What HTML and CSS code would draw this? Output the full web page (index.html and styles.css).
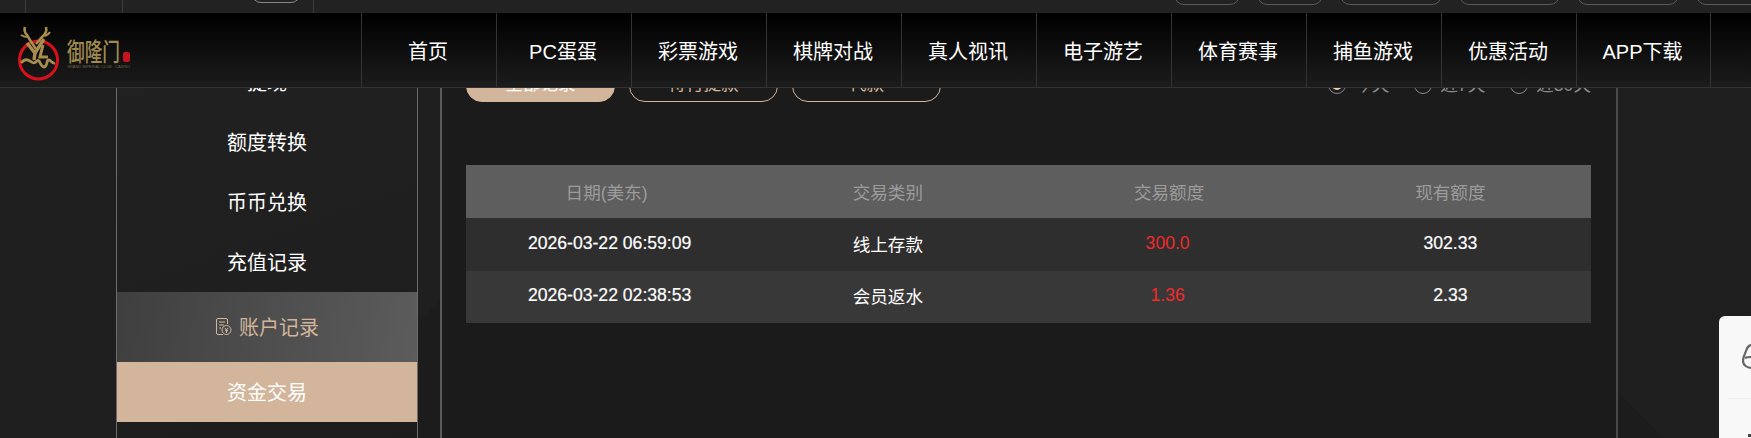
FILE: index.html
```html
<!DOCTYPE html>
<html lang="zh-CN">
<head>
<meta charset="utf-8">
<title>资金交易</title>
<link rel="stylesheet" href="styles.css">
</head>
<body>
<header class="header">
  <div class="topbar">
    <div class="top-cell top-cell-a"></div>
    <div class="top-cell top-cell-b"></div>
    <div class="top-cell top-cell-c"><span class="top-btn top-btn-left"></span></div>
    <div class="top-cell top-cell-d"></div>
    <div class="top-actions">
      <span class="top-btn top-btn-sm"></span>
      <span class="top-btn top-btn-sm"></span>
      <span class="top-btn top-btn-lg"></span>
      <span class="top-btn top-btn-lg"></span>
      <span class="top-btn top-btn-lg"></span>
      <span class="top-btn top-btn-lg"></span>
    </div>
  </div>
  <nav class="nav">
    <a class="logo" href="#">
      <svg class="logo-art" width="125" height="72" viewBox="0 0 125 72">
        <circle cx="26.500" cy="46" r="19" fill="none" stroke="#d8101c" stroke-width="3"/>
        <g fill="none" stroke="#a88d4e">
          <path d="M13 13c-1 3 0 6 2 8l3 5 6 9" stroke-width="2.600"/>
          <path d="M34 13c1 4 0 7-4 10l-6 7" stroke-width="2.600"/>
          <path d="M9 21c3 2 5 2 8 2M38 18c-1 2-3 3-5 4" stroke-width="2"/>
          <path d="M15 29l8 10 9-14M23 39l-1 7" stroke-width="3.400"/>
          <path d="M31 31l-3 12h8" stroke-width="3"/>
          <path d="M9 49c3-4 6-4 9-2s4 3 7 0 3 6 7 6 2-8 5-7 3 4 6 3" stroke-width="2.800"/>
        </g>
        <rect x="111" y="38" width="7" height="10" rx="2" fill="#c8141e"/>
        <text class="logo-name" transform="translate(55 47) scale(1 1.300)" textLength="53" lengthAdjust="spacingAndGlyphs">御隆门</text>
        <text class="logo-sub" x="55" y="54" textLength="63" lengthAdjust="spacingAndGlyphs">GRAND IMPERIAL CLUB · CASINO</text>
      </svg>
    </a>
    <ul class="menu">
      <li class="menu-item">首页</li>
      <li class="menu-item">PC蛋蛋</li>
      <li class="menu-item">彩票游戏</li>
      <li class="menu-item">棋牌对战</li>
      <li class="menu-item">真人视讯</li>
      <li class="menu-item">电子游艺</li>
      <li class="menu-item">体育赛事</li>
      <li class="menu-item">捕鱼游戏</li>
      <li class="menu-item">优惠活动</li>
      <li class="menu-item">APP下载</li>
    </ul>
  </nav>
</header>

<div class="page">
  <aside class="sidebar">
    <div class="side-row">提现</div>
    <div class="side-row">额度转换</div>
    <div class="side-row">币币兑换</div>
    <div class="side-row">充值记录</div>
    <div class="side-group">
      <svg class="side-icon" width="17" height="18" viewBox="0 0 17 18" fill="none" stroke="currentColor" stroke-width="1">
        <path d="M8 16.500H3a1.500 1.500 0 0 1-1.500-1.500V2A1.500 1.500 0 0 1 3 .5h8A1.500 1.500 0 0 1 12.500 2v4"/>
        <path d="M4 4h6M4 7h5M4 10h2"/>
        <circle cx="11.500" cy="12" r="4.500"/>
        <path d="M10 10l1.500 2 1.500-2M11.500 12v3M10 12.700h3"/>
      </svg>
      <span>账户记录</span>
    </div>
    <div class="side-row side-row-active">资金交易</div>
  </aside>

  <main class="main">
    <div class="filters">
      <div class="tabs">
        <span class="tab tab-active">全部记录</span>
        <span class="tab">待付提款</span>
        <span class="tab">代款</span>
      </div>
      <div class="radios">
        <span class="radio"><i class="radio-dot radio-dot-on"></i>今天</span>
        <span class="radio"><i class="radio-dot"></i>近7天</span>
        <span class="radio"><i class="radio-dot"></i>近30天</span>
      </div>
    </div>
    <table class="records">
      <thead>
        <tr><th>日期(美东)</th><th>交易类别</th><th>交易额度</th><th>现有额度</th></tr>
      </thead>
      <tbody>
        <tr><td class="date">2026-03-22 06:59:09</td><td>线上存款</td><td class="amount">300.0</td><td class="balance">302.33</td></tr>
        <tr><td class="date">2026-03-22 02:38:53</td><td>会员返水</td><td class="amount">1.36</td><td class="balance">2.33</td></tr>
      </tbody>
    </table>
  </main>
</div>

<aside class="float-panel">
  <svg class="float-icon" width="10" height="26" viewBox="0 0 10 26" fill="none" stroke="#666" stroke-width="2.200">
    <path d="M10 1C6 1 5 4 4 7 3 10 1 13 1 17c0 4 4 7 9 7"/>
    <path d="M3 14c2-1 4-1 7-1"/>
  </svg>
  <div class="float-divider"></div>
  <span class="float-dot"></span>
</aside>
</body>
</html>
```
FILE: styles.css
```css
* { box-sizing: border-box; }

html, body {
  margin: 0;
  height: 438px;
  overflow: hidden;
}

body {
  background: #1c1c1c;
  color: #fff;
  font-family: "Liberation Sans", "Noto Sans CJK SC", sans-serif;
  font-size: 17.6px;
}

/* header */
.header {
  position: relative;
  z-index: 2;
}

.topbar {
  display: flex;
  height: 13px;
  overflow: hidden;
  background: #222;
}

.top-cell {
  display: flex;
  flex: none;
  align-items: flex-end;
  justify-content: flex-end;
  border-left: 1px solid #3c3c3c;
}

.top-cell-a { width: 25px; border-left: 0; }
.top-cell-b { width: 97px; }
.top-cell-c { width: 191px; padding: 0 12px 10px 0; }
.top-cell-d { width: 1px; }

.top-actions {
  display: flex;
  flex: none;
  align-items: flex-end;
  gap: 17px;
  margin-left: 860px;
  padding-bottom: 8px;
}

.top-btn {
  flex: none;
  height: 30px;
  border: 1px solid #5a5a5a;
  border-radius: 10px;
}

.top-btn-left { width: 50px; border-color: #888; }
.top-btn-sm { width: 66px; }
.top-btn-lg { width: 101.500px; }

.nav {
  display: flex;
  height: 75px;
  background: linear-gradient(#000, #1c1c1c);
  border-bottom: 1px solid #333;
}

.logo {
  display: block;
  width: 361px;
  flex: none;
  height: 74px;
  overflow: hidden;
  padding: 1px 0 0 12px;
}

.logo-art { display: block; }

.logo-name {
  fill: #a08a50;
  font-size: 19px;
  font-weight: 500;
}

.logo-sub {
  fill: #6f6448;
  font-size: 4px;
}

.menu {
  display: flex;
  list-style: none;
  margin: 0;
  padding: 0;
}

.menu-item {
  display: flex;
  align-items: center;
  justify-content: center;
  width: 135px;
  padding: 1px 2px 0 0;
  font-size: 20px;
  border-left: 1px solid #333;
}

.menu-item:last-child { border-right: 1px solid #333; }

/* page, scrolled under the header */
.page {
  display: flex;
  align-items: stretch;
  height: 400px;
  margin-top: -36px;
  padding-left: 116px;
  background:
    linear-gradient(135deg, rgba(255,255,255,.012) 0 32%, transparent 32%),
    linear-gradient(45deg, transparent 78%, rgba(255,255,255,.012) 78%);
}

.sidebar {
  width: 302px;
  flex: none;
  text-align: center;
  font-size: 20px;
  border-left: 1px solid #6b6b6b;
  border-right: 1px solid #6b6b6b;
  background: linear-gradient(160deg, #212121 0, #1f1f1f 60%, #1c1c1c 100%);
}

.side-row {
  display: flex;
  align-items: center;
  justify-content: center;
  height: 60px;
  padding-bottom: 2px;
}

.side-group {
  display: flex;
  align-items: center;
  justify-content: center;
  gap: 7px;
  height: 70px;
  padding-bottom: 1px;
  color: #d2b59b;
  background: linear-gradient(100deg, #3f3f3f, #5c5c5c);
}

.side-icon { flex: none; }

.side-row-active { background: #d2b59b; }

.main {
  width: 1178px;
  flex: none;
  margin-left: 22px;
  padding: 10px 25px 0 24px;
  border-left: 2px solid #5a5a5a;
  border-right: 2px solid #4a4a4a;
  background: #1b1b1b;
}

.filters {
  display: flex;
  justify-content: space-between;
  height: 103px;
}

.tabs {
  display: flex;
  gap: 14px;
}

.tab {
  display: flex;
  align-items: center;
  justify-content: center;
  width: 149px;
  height: 40px;
  color: #d2b59b;
  border: 1px solid #d2b59b;
  border-radius: 16px;
}

.tab-active {
  color: #fff;
  background: #d2b59b;
}

.radios {
  display: flex;
  align-items: flex-start;
  gap: 25px;
  padding-top: 14px;
  color: #8a8a8a;
}

.radio {
  display: flex;
  align-items: center;
  gap: 8px;
  line-height: 18px;
}

.radio-dot {
  position: relative;
  width: 18px;
  height: 18px;
  border: 1px solid #8a8a8a;
  border-radius: 50%;
}

.radio-dot-on::after {
  content: "";
  position: absolute;
  inset: 3px;
  border-radius: 50%;
  background: #f0cfb0;
}

.records {
  width: 1125px;
  border-collapse: collapse;
  table-layout: fixed;
  text-align: center;
}

.records th {
  height: 53px;
  padding: 0 0 1px;
  font-weight: 400;
  color: #9c9c9c;
  background: #5e5e5e;
}

.records td {
  padding: 0 0 2px;
  height: 52.500px;
}

.records tbody tr:nth-child(odd) { background: #2e2e2e; }
.records tbody tr:nth-child(even) { background: #383838; }

.records .date {
  padding-left: 6px;
  -webkit-text-stroke: 0.2px currentColor;
}

.records .balance { -webkit-text-stroke: 0.2px currentColor; }

.records .amount { padding-right: 3px; color: #f22a2a; }

/* floating service panel at the window edge */
.float-panel {
  position: absolute;
  top: 316px;
  right: 0;
  width: 32px;
  height: 122px;
  overflow: hidden;
  background: #f8f8f8;
  border-radius: 6px 0 0 0;
}

.float-icon {
  position: absolute;
  top: 28px;
  left: 23px;
}

.float-divider {
  position: absolute;
  top: 82px;
  left: 9px;
  right: 0;
  height: 1px;
  background: #ececec;
}

.float-dot {
  position: absolute;
  top: 118px;
  left: 29px;
  width: 3px;
  height: 3px;
  background: #444;
}
```
